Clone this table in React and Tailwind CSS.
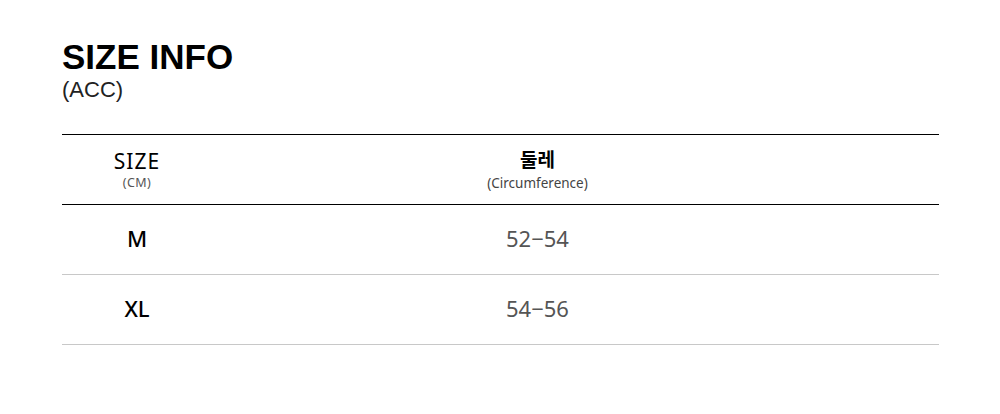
import React from 'react';

const rows = [
  { size: 'M', value: '52−54' },
  { size: 'XL', value: '54−56' },
];

const App = () => {
  return (
    <div className="w-[1000px] h-[414px] bg-white pl-[62px] pt-[39px]" style={{ fontFamily: '"Noto Sans", "Noto Sans CJK KR", sans-serif' }}>
      <h1 className="text-[35px] leading-none font-bold text-black" style={{ fontFamily: '"Liberation Sans", Arial, sans-serif' }}>
        SIZE INFO
      </h1>
      <p className="mt-[5px] text-[22px] leading-none text-[#222]" style={{ fontFamily: '"Liberation Sans", Arial, sans-serif' }}>
        (ACC)
      </p>

      <div className="mt-[33px] w-[877px]">
        <div className="grid grid-cols-[150px_651px_1fr] h-[71px] border-y border-black">
          <div className="flex flex-col items-center justify-center">
            <span className="text-[21px] leading-none tracking-[1px] text-black pt-[1px]">SIZE</span>
            <span className="text-[12.5px] leading-none text-[#555] mt-[5px] tracking-[0.5px]">(CM)</span>
          </div>
          <div className="flex flex-col items-center justify-center">
            <span className="text-[19px] leading-none font-bold text-black" style={{ fontFamily: '"Noto Sans CJK KR", sans-serif' }}>둘레</span>
            <span className="text-[13.5px] leading-none text-[#444] mt-[9px]">(Circumference)</span>
          </div>
          <div />
        </div>

        {rows.map((row) => (
          <div key={row.size} className="grid grid-cols-[150px_651px_1fr] h-[70px] pb-[4px] border-b border-[#c8c8c8] items-center">
            <div className="text-center text-[22px] font-medium text-black leading-none">{row.size}</div>
            <div className="text-center text-[22px] text-[#555] leading-none">{row.value}</div>
            <div />
          </div>
        ))}
      </div>
    </div>
  );
};

export default App;
